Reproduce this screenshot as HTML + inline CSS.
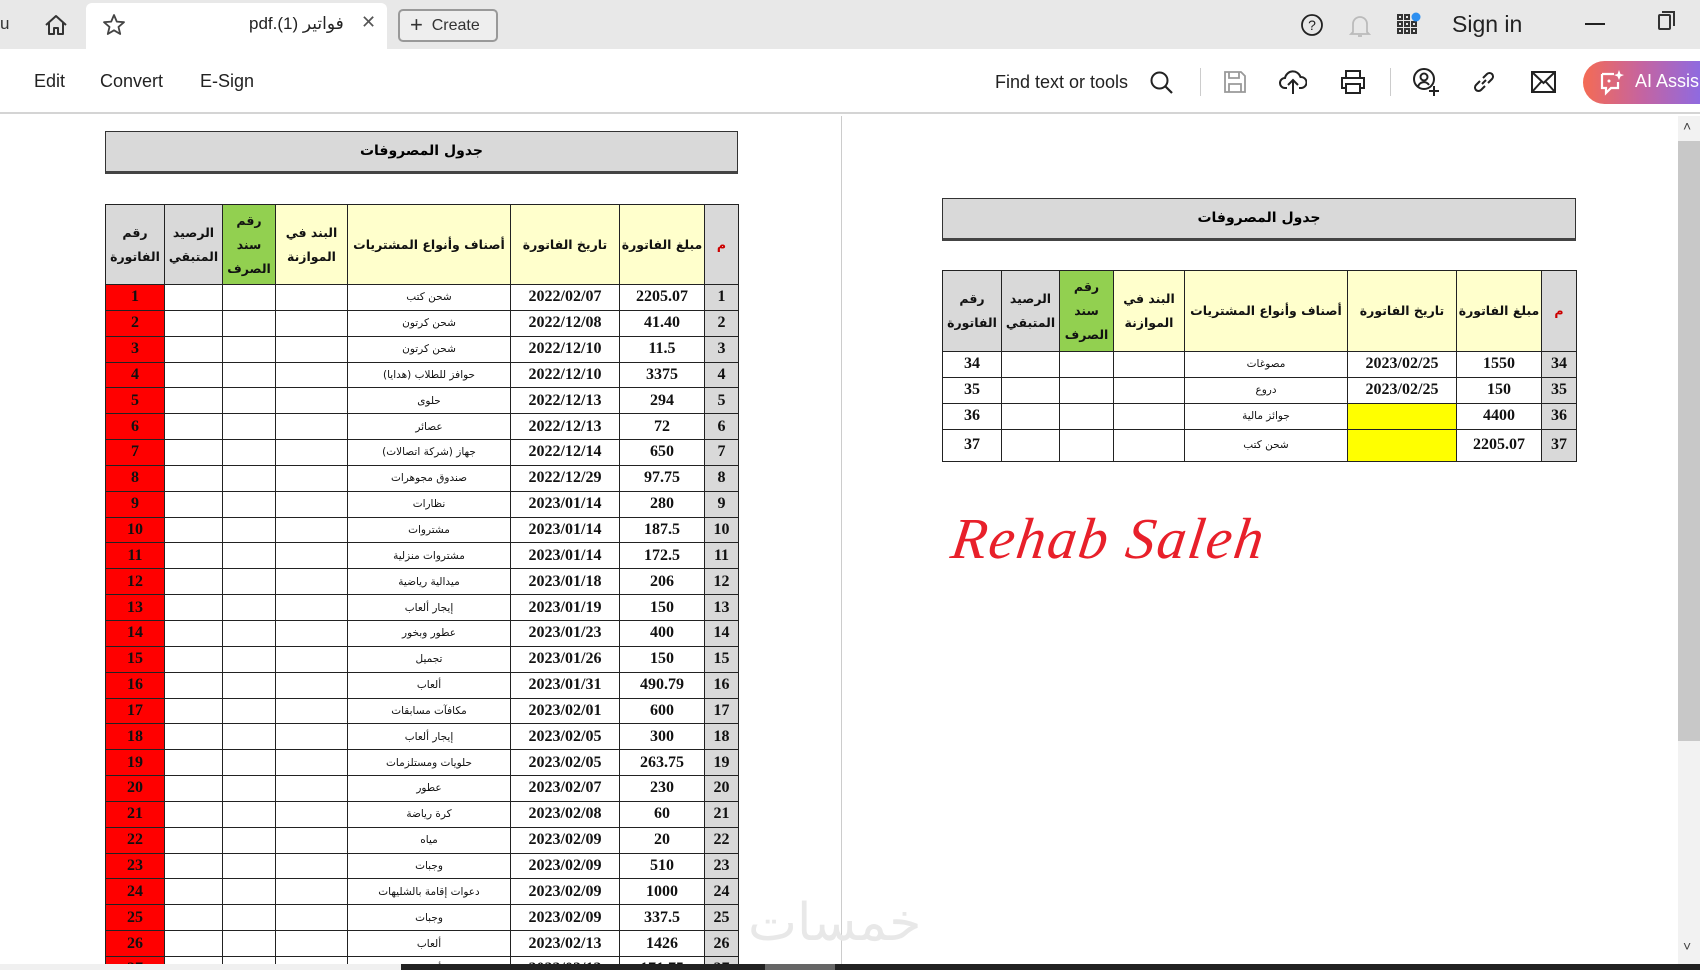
<!DOCTYPE html>
<html><head><meta charset="utf-8"><style>
*{margin:0;padding:0;box-sizing:border-box}
html,body{width:1700px;height:970px;overflow:hidden}
body{background:#fff;font-family:"Liberation Sans","Noto Sans CJK SC",sans-serif;position:relative}
.abs{position:absolute}
.top{left:0;top:0;width:1700px;height:49px;background:#e8e8e8}
.tab{left:86px;top:3px;width:301px;height:46px;background:#fff;border-radius:6px 6px 0 0}
.tb{left:0;top:49px;width:1700px;height:65px;background:#fff;border-bottom:2px solid #d4d4d4}
.menu{top:71px;font-size:18px;color:#222}
table{border-collapse:collapse;table-layout:fixed;position:absolute}
td{border:1px solid #222;text-align:center;font-family:"Liberation Serif",serif;font-weight:bold;font-size:16px;color:#111;height:25.85px;padding:0;overflow:hidden;white-space:nowrap}
td.a{font-family:"DejaVu Sans","Liberation Sans",sans-serif;font-weight:normal;font-size:10.5px}
td.r{background:#f00}
td.n{background:#d9d9d9}
tr.h td{font-family:"DejaVu Sans",sans-serif;font-size:12.5px;font-weight:bold;line-height:24px;white-space:normal}
.y{background:#ffffcc}.gr{background:#92d050}.hg{background:#d9d9d9}
.ttl{background:#d9d9d9;border:1px solid #333;border-bottom:3px solid #444;font-family:"DejaVu Sans",sans-serif;font-weight:bold;font-size:14px;text-align:center}
</style></head><body>
<div class="abs top"></div>
<div class="abs" style="left:0;top:14px;font-size:17px;color:#333">u</div>
<svg class="abs" style="left:43px;top:13px" width="26" height="24" viewBox="0 0 26 24"><path d="M3 12 L13 3 L23 12 M6 10 V21 H11 V15 H15 V21 H20 V10" fill="none" stroke="#333" stroke-width="2" stroke-linejoin="round"/></svg>
<div class="abs tab"></div>
<svg class="abs" style="left:102px;top:13px" width="24" height="24" viewBox="0 0 24 24"><path d="M12 2 L14.8 8.6 L22 9.2 L16.5 13.9 L18.2 21 L12 17.3 L5.8 21 L7.5 13.9 L2 9.2 L9.2 8.6 Z" fill="none" stroke="#444" stroke-width="1.8" stroke-linejoin="round"/></svg>
<div class="abs" style="left:249px;top:14px;font-size:17px;color:#222;font-family:'Liberation Sans','DejaVu Sans',sans-serif">pdf.(1) فواتير</div>
<div class="abs" style="left:361px;top:12px;font-size:18px;color:#555">✕</div>
<div class="abs" style="left:398px;top:9px;width:100px;height:33px;border:2px solid #999;border-radius:5px;background:#eee;font-size:16px;color:#333;padding:5px 0 0 10px"><span style="font-size:22px;line-height:18px;vertical-align:-2px">+</span>&nbsp; Create</div>
<svg class="abs" style="left:1300px;top:13px" width="24" height="24" viewBox="0 0 24 24"><circle cx="12" cy="12" r="10" fill="none" stroke="#222" stroke-width="1.8"/><text x="12" y="17" font-size="14" text-anchor="middle" font-family="Liberation Sans" fill="#222">?</text></svg>
<svg class="abs" style="left:1349px;top:13px" width="22" height="26" viewBox="0 0 22 26"><path d="M4 19 V11 a7 7 0 0 1 14 0 V19 L20 21 H2 Z M9 23 h4" fill="none" stroke="#bbb" stroke-width="1.8"/></svg>
<svg class="abs" style="left:1396px;top:12px" width="26" height="26" viewBox="0 0 26 26"><g fill="none" stroke="#333" stroke-width="2"><rect x="2" y="3" width="4" height="4"/><rect x="9" y="3" width="4" height="4"/><rect x="2" y="10" width="4" height="4"/><rect x="9" y="10" width="4" height="4"/><rect x="16" y="10" width="4" height="4"/><rect x="2" y="17" width="4" height="4"/><rect x="9" y="17" width="4" height="4"/><rect x="16" y="17" width="4" height="4"/></g><circle cx="20" cy="5" r="4.5" fill="#2d8ff0"/></svg>
<div class="abs" style="left:1452px;top:11px;font-size:23px;color:#222">Sign in</div>
<div class="abs" style="left:1585px;top:23px;width:20px;height:2px;background:#222"></div>
<div class="abs" style="left:1658px;top:14px;width:13px;height:16px;border:2px solid #333;border-radius:2px"></div>
<div class="abs" style="left:1662px;top:11px;width:13px;height:15px;border-top:2px solid #333;border-right:2px solid #333"></div>

<div class="abs tb"></div>
<div class="abs menu" style="left:34px">Edit</div>
<div class="abs menu" style="left:100px">Convert</div>
<div class="abs menu" style="left:200px">E-Sign</div>
<div class="abs menu" style="left:995px;top:72px;font-size:18px">Find text or tools</div>
<svg class="abs" style="left:1149px;top:70px" width="26" height="26" viewBox="0 0 26 26"><circle cx="10.5" cy="10.5" r="8" fill="none" stroke="#222" stroke-width="2"/><path d="M16.5 16.5 L23 23" stroke="#222" stroke-width="2.2"/></svg>
<div class="abs" style="left:1200px;top:68px;width:1px;height:28px;background:#ccc"></div>
<svg class="abs" style="left:1222px;top:69px" width="26" height="26" viewBox="0 0 26 26"><path d="M3 3 H19 L23 7 V23 H3 Z M7 3 V9 H17 V3 M7 23 V15 H19 V23" fill="none" stroke="#999" stroke-width="1.8"/></svg>
<svg class="abs" style="left:1279px;top:68px" width="28" height="28" viewBox="0 0 28 28"><path d="M8 20 H6 a5 5 0 0 1 0-10 a8 8 0 0 1 15.5-1 a5.5 5.5 0 0 1 1 11 H20 M14 26 V12 M9 17 L14 12 L19 17" fill="none" stroke="#222" stroke-width="2"/></svg>
<svg class="abs" style="left:1339px;top:68px" width="28" height="28" viewBox="0 0 28 28"><path d="M7 10 V3 H21 V10 M7 20 H3 V10 H25 V20 H21 M7 16 H21 V25 H7 Z" fill="none" stroke="#222" stroke-width="2"/></svg>
<div class="abs" style="left:1390px;top:68px;width:1px;height:28px;background:#ccc"></div>
<svg class="abs" style="left:1411px;top:67px" width="30" height="30" viewBox="0 0 30 30"><circle cx="13" cy="12" r="10" fill="none" stroke="#222" stroke-width="2"/><circle cx="13" cy="10" r="3.5" fill="none" stroke="#222" stroke-width="2"/><path d="M7 20 a6 6 0 0 1 11-2 M23 19 V29 M18 24 H28" fill="none" stroke="#222" stroke-width="2"/></svg>
<svg class="abs" style="left:1470px;top:68px" width="28" height="28" viewBox="0 0 28 28"><path d="M12 16 L16 12 M10 13 L6 17 a3.5 3.5 0 0 0 5 5 L15 18 M18 15 L22 11 a3.5 3.5 0 0 0-5-5 L13 10" fill="none" stroke="#222" stroke-width="2"/></svg>
<svg class="abs" style="left:1530px;top:70px" width="27" height="24" viewBox="0 0 27 24"><path d="M2 2 H25 V22 H2 Z M2 2 L13.5 13 L25 2 M2 22 L11 12 M25 22 L16 12" fill="none" stroke="#222" stroke-width="2"/></svg>
<div class="abs" style="left:1583px;top:61px;width:117px;height:43px;border-radius:22px 0 0 22px;background:linear-gradient(90deg,#f46b54,#c564a0 50%,#8f6ae0);color:#fff;font-size:18px;padding:10px 0 0 52px;white-space:nowrap;overflow:hidden">AI Assis</div>
<svg class="abs" style="left:1598px;top:68px" width="28" height="28" viewBox="0 0 28 28"><path d="M4 6 H16 M4 6 V20 H8 V25 L13 20 H20 V14" fill="none" stroke="#fff" stroke-width="2.2"/><path d="M21 2 L22.5 6 L26 7 L22.5 8.5 L21 12 L19.5 8.5 L16 7 L19.5 6 Z" fill="#fff"/><circle cx="11" cy="13" r="1.5" fill="#fff"/></svg>

<div class="abs" style="left:841px;top:116px;width:1px;height:850px;background:#ccc"></div>
<div class="abs" style="left:1678px;top:116px;width:22px;height:848px;background:#f2f2f2"></div>
<div class="abs" style="left:1678px;top:141px;width:22px;height:600px;background:#c8c8c8"></div>
<div class="abs" style="left:1683px;top:118px;font-size:14px;color:#444">˄</div>
<div class="abs" style="left:1683px;top:938px;font-size:14px;color:#444">˅</div>

<div class="abs ttl" style="left:105px;top:131px;width:633px;height:43px;line-height:38px">جدول المصروفات</div>
<div class="abs" style="left:100px;top:200px;width:645px;height:764px;overflow:hidden">
<table style="left:5px;top:4px;width:633px">
<colgroup><col style="width:59px"><col style="width:58px"><col style="width:53px"><col style="width:72px"><col style="width:163px"><col style="width:109px"><col style="width:85px"><col style="width:34px"></colgroup>
<tr class="h" style="height:80px"><td class="hg">رقم الفاتورة</td><td class="hg">الرصيد المتبقي</td><td class="gr">رقم سند الصرف</td><td class="y">البند في الموازنة</td><td class="y">أصناف وأنواع المشتريات</td><td class="y">تاريخ الفاتورة</td><td class="y">مبلغ الفاتورة</td><td class="hg" style="color:#c00">م</td></tr>
<tr><td class="r">1</td><td></td><td></td><td></td><td class="a">شحن كتب</td><td>2022/02/07</td><td>2205.07</td><td class="n">1</td></tr>
<tr><td class="r">2</td><td></td><td></td><td></td><td class="a">شحن كرتون</td><td>2022/12/08</td><td>41.40</td><td class="n">2</td></tr>
<tr><td class="r">3</td><td></td><td></td><td></td><td class="a">شحن كرتون</td><td>2022/12/10</td><td>11.5</td><td class="n">3</td></tr>
<tr><td class="r">4</td><td></td><td></td><td></td><td class="a">(هدايا) حوافز للطلاب</td><td>2022/12/10</td><td>3375</td><td class="n">4</td></tr>
<tr><td class="r">5</td><td></td><td></td><td></td><td class="a">حلوى</td><td>2022/12/13</td><td>294</td><td class="n">5</td></tr>
<tr><td class="r">6</td><td></td><td></td><td></td><td class="a">عصائر</td><td>2022/12/13</td><td>72</td><td class="n">6</td></tr>
<tr><td class="r">7</td><td></td><td></td><td></td><td class="a">جهاز (شركة اتصالات)</td><td>2022/12/14</td><td>650</td><td class="n">7</td></tr>
<tr><td class="r">8</td><td></td><td></td><td></td><td class="a">صندوق مجوهرات</td><td>2022/12/29</td><td>97.75</td><td class="n">8</td></tr>
<tr><td class="r">9</td><td></td><td></td><td></td><td class="a">نظارات</td><td>2023/01/14</td><td>280</td><td class="n">9</td></tr>
<tr><td class="r">10</td><td></td><td></td><td></td><td class="a">مشتروات</td><td>2023/01/14</td><td>187.5</td><td class="n">10</td></tr>
<tr><td class="r">11</td><td></td><td></td><td></td><td class="a">مشتروات منزلية</td><td>2023/01/14</td><td>172.5</td><td class="n">11</td></tr>
<tr><td class="r">12</td><td></td><td></td><td></td><td class="a">ميدالية رياضية</td><td>2023/01/18</td><td>206</td><td class="n">12</td></tr>
<tr><td class="r">13</td><td></td><td></td><td></td><td class="a">إيجار ألعاب</td><td>2023/01/19</td><td>150</td><td class="n">13</td></tr>
<tr><td class="r">14</td><td></td><td></td><td></td><td class="a">عطور وبخور</td><td>2023/01/23</td><td>400</td><td class="n">14</td></tr>
<tr><td class="r">15</td><td></td><td></td><td></td><td class="a">تجميل</td><td>2023/01/26</td><td>150</td><td class="n">15</td></tr>
<tr><td class="r">16</td><td></td><td></td><td></td><td class="a">ألعاب</td><td>2023/01/31</td><td>490.79</td><td class="n">16</td></tr>
<tr><td class="r">17</td><td></td><td></td><td></td><td class="a">مكافآت مسابقات</td><td>2023/02/01</td><td>600</td><td class="n">17</td></tr>
<tr><td class="r">18</td><td></td><td></td><td></td><td class="a">إيجار ألعاب</td><td>2023/02/05</td><td>300</td><td class="n">18</td></tr>
<tr><td class="r">19</td><td></td><td></td><td></td><td class="a">حلويات ومستلزمات</td><td>2023/02/05</td><td>263.75</td><td class="n">19</td></tr>
<tr><td class="r">20</td><td></td><td></td><td></td><td class="a">عطور</td><td>2023/02/07</td><td>230</td><td class="n">20</td></tr>
<tr><td class="r">21</td><td></td><td></td><td></td><td class="a">كرة رياضة</td><td>2023/02/08</td><td>60</td><td class="n">21</td></tr>
<tr><td class="r">22</td><td></td><td></td><td></td><td class="a">مياه</td><td>2023/02/09</td><td>20</td><td class="n">22</td></tr>
<tr><td class="r">23</td><td></td><td></td><td></td><td class="a">وجبات</td><td>2023/02/09</td><td>510</td><td class="n">23</td></tr>
<tr><td class="r">24</td><td></td><td></td><td></td><td class="a">دعوات إقامة بالشليهات</td><td>2023/02/09</td><td>1000</td><td class="n">24</td></tr>
<tr><td class="r">25</td><td></td><td></td><td></td><td class="a">وجبات</td><td>2023/02/09</td><td>337.5</td><td class="n">25</td></tr>
<tr><td class="r">26</td><td></td><td></td><td></td><td class="a">ألعاب</td><td>2023/02/13</td><td>1426</td><td class="n">26</td></tr>
<tr><td class="r">27</td><td></td><td></td><td></td><td class="a">ألعاب</td><td>2023/02/13</td><td>171.75</td><td class="n">27</td></tr>
</table>
</div>

<div class="abs ttl" style="left:942px;top:198px;width:634px;height:43px;line-height:38px">جدول المصروفات</div>
<table style="left:942px;top:270px;width:634px">
<colgroup><col style="width:59px"><col style="width:58px"><col style="width:54px"><col style="width:71px"><col style="width:163px"><col style="width:109px"><col style="width:85px"><col style="width:35px"></colgroup>
<tr class="h" style="height:81px"><td class="hg">رقم الفاتورة</td><td class="hg">الرصيد المتبقي</td><td class="gr">رقم سند الصرف</td><td class="y">البند في الموازنة</td><td class="y">أصناف وأنواع المشتريات</td><td class="y">تاريخ الفاتورة</td><td class="y">مبلغ الفاتورة</td><td class="hg" style="color:#c00">م</td></tr>
<tr><td>34</td><td></td><td></td><td></td><td class="a">مصوغات</td><td>2023/02/25</td><td>1550</td><td class="n">34</td></tr>
<tr><td>35</td><td></td><td></td><td></td><td class="a">دروع</td><td>2023/02/25</td><td>150</td><td class="n">35</td></tr>
<tr><td>36</td><td></td><td></td><td></td><td class="a">جوائز مالية</td><td style="background:#ffff00"></td><td>4400</td><td class="n">36</td></tr>
<tr style="height:32px"><td>37</td><td></td><td></td><td></td><td class="a">شحن كتب</td><td style="background:#ffff00"></td><td>2205.07</td><td class="n">37</td></tr>
</table>
<div class="abs" style="left:952px;top:505px;font-family:'Liberation Serif',serif;font-style:italic;font-size:58px;color:#e8202a;letter-spacing:2px;transform:skewX(-8deg)">Rehab Saleh</div>
<div class="abs" style="left:748px;top:893px;font-family:'DejaVu Sans',sans-serif;font-size:52px;color:#e8e8e8">خمسات</div>

<div class="abs" style="left:0;top:964px;width:1700px;height:6px;background:#f0f0f0"></div>
<div class="abs" style="left:401px;top:964px;width:1299px;height:6px;background:#222"></div>
<div class="abs" style="left:765px;top:964px;width:70px;height:6px;background:#666"></div>
</body></html>
